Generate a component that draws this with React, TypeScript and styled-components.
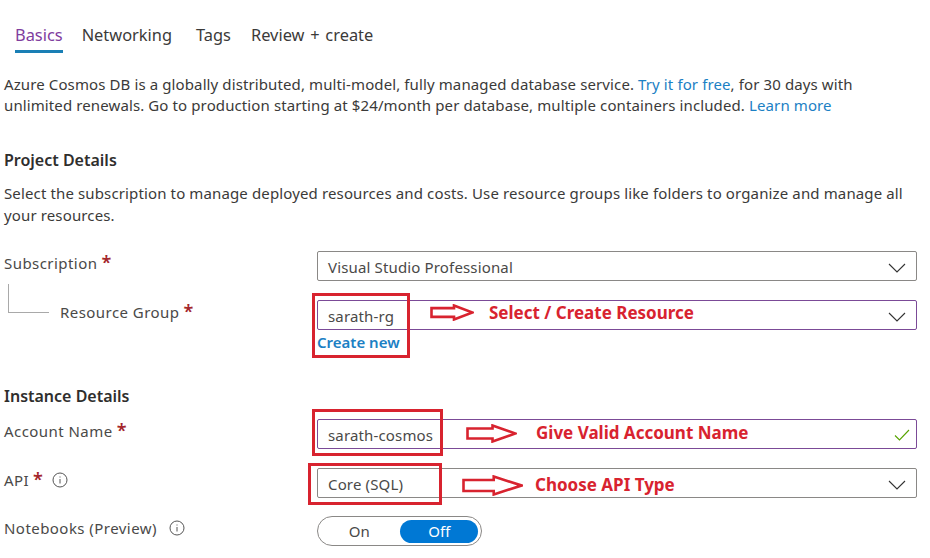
import React from "react";
import styled, { createGlobalStyle } from "styled-components";

const Global = createGlobalStyle`
  html, body { margin: 0; padding: 0; background: #fff; }
  body { font-family: "Noto Sans", "Open Sans", sans-serif; color: #323130; }
`;

const Page = styled.div`
  position: relative;
  width: 930px;
  height: 558px;
  overflow: hidden;
  box-sizing: border-box;
  padding: 0 13px 0 4px;
  background: #fff;
`;

const Tabs = styled.nav`
  display: flex;
  height: 53px;
  padding-left: 11px;
  gap: 20px;
`;

const Tab = styled.a<{ $active?: boolean; $gap?: number }>`
  display: block;
  box-sizing: border-box;
  height: 53px;
  padding-top: 23px;
  font-size: 16.4px;
  line-height: 24px;
  word-spacing: 1.5px;
  color: ${(p) => (p.$active ? "#803d9e" : "#3b3a39")};
  border-bottom: 3px solid ${(p) => (p.$active ? "#1a7fb5" : "transparent")};
  margin-right: ${(p) => p.$gap ?? 0}px;
`;

const Intro = styled.p`
  margin: 21px 0 0;
  font-size: 15px;
  letter-spacing: 0.11px;
  line-height: 21px;
  color: #3b3a39;
  white-space: nowrap;
`;

const Link = styled.a`
  color: #1b80c4;
`;

const SectionTitle = styled.h2<{ $top: number }>`
  margin: ${(p) => p.$top}px 0 0;
  font-size: 16px;
  line-height: 22px;
  font-weight: 600;
  color: #2f2e2d;
`;

const Description = styled.p`
  margin: 11px 0 0;
  width: 910px;
  font-size: 15px;
  letter-spacing: 0.13px;
  line-height: 22px;
  color: #3b3a39;
`;

const Row = styled.div<{ $top: number }>`
  display: grid;
  grid-template-columns: 313px 600px;
  margin-top: ${(p) => p.$top}px;
`;

const Label = styled.div`
  display: flex;
  align-items: center;
  height: 24px;
  font-size: 15px;
  letter-spacing: 0.45px;
  color: #4a4948;
  white-space: nowrap;
`;

const Star = styled.span`
  align-self: flex-start;
  color: #a4262c;
  margin-left: 4px;
  font-size: 18px;
  line-height: 22px;
  font-weight: 600;
`;

const Info = styled.svg<{ $left: number }>`
  width: 16px;
  height: 16px;
  margin-left: ${(p) => p.$left}px;
  color: #555;
`;

const Connector = styled.span`
  display: block;
  flex: none;
  box-sizing: border-box;
  width: 41px;
  height: 29px;
  margin: -27px 11px 0 4px;
  border-left: 1px solid #a9a9a9;
  border-bottom: 1px solid #a9a9a9;
`;

const FieldBox = styled.div<{ $focus?: boolean }>`
  display: flex;
  align-items: center;
  justify-content: space-between;
  box-sizing: border-box;
  height: 30px;
  padding: 2px 19px 0 10px;
  border: 1px solid ${(p) => (p.$focus ? "#7b4a97" : "#8a8886")};
  border-radius: 2px;
  font-size: 15px;
  letter-spacing: 0.15px;
  color: #4a4948;
  background: #fff;
`;

const FieldValue = styled.span`
  padding-top: 0;
`;

const CreateNew = styled.a`
  display: block;
  margin-top: 2px;
  font-size: 15px;
  line-height: 20px;
  font-weight: 600;
  color: #1b80c4;
`;

const Toggle = styled.div`
  display: flex;
  align-items: center;
  box-sizing: border-box;
  width: 165px;
  height: 30px;
  padding: 0 3px 0 0;
  border: 1px solid #8a8886;
  border-radius: 15px;
  font-size: 15px;
`;

const ToggleOption = styled.span<{ $on?: boolean }>`
  display: flex;
  align-items: center;
  justify-content: center;
  width: ${(p) => (p.$on ? 78 : 83)}px;
  height: 23px;
  border-radius: 12px;
  color: ${(p) => (p.$on ? "#fff" : "#4a4948")};
  background: ${(p) => (p.$on ? "#0078d4" : "transparent")};
`;

const Markup = styled.div<{ $x: number; $y: number; $w: number; $h: number }>`
  position: absolute;
  box-sizing: border-box;
  left: ${(p) => p.$x}px;
  top: ${(p) => p.$y}px;
  width: ${(p) => p.$w}px;
  height: ${(p) => p.$h}px;
  border: 3px solid #d8232f;
`;

const Note = styled.span<{ $x: number; $y: number }>`
  position: absolute;
  left: ${(p) => p.$x}px;
  top: ${(p) => p.$y}px;
  font-size: 17px;
  line-height: 22px;
  font-weight: 700;
  color: #d8232f;
  white-space: nowrap;
  font-family: "Noto Sans", "Open Sans", sans-serif;
`;

const ArrowSvg = styled.svg<{ $x: number; $y: number }>`
  position: absolute;
  left: ${(p) => p.$x}px;
  top: ${(p) => p.$y}px;
`;

const Arrow = ({ x, y, w, h }: { x: number; y: number; w: number; h: number }) => {
  const head = x === 430 ? 20 : w * 0.48;
  const mid = h / 2;
  const sh = h * 0.26;
  const pts = [
    [1.5, mid - sh],
    [w - head, mid - sh],
    [w - head, 1.5],
    [w - 1.5, mid],
    [w - head, h - 1.5],
    [w - head, mid + sh],
    [1.5, mid + sh],
  ]
    .map((p) => p.join(","))
    .join(" ");
  return (
    <ArrowSvg $x={x} $y={y} width={w} height={h} viewBox={`0 0 ${w} ${h}`}>
      <polygon points={pts} fill="#fff" stroke="#d8232f" strokeWidth="2.6" />
    </ArrowSvg>
  );
};

const ChevronSvg = styled.svg`
  margin: 2px -9px 0 0;
`;

const Chevron = () => (
  <ChevronSvg width="18" height="10" viewBox="0 0 18 10" fill="none">
    <path d="M1 1l8 8 8-8" stroke="#333" strokeWidth="1.1" />
  </ChevronSvg>
);

const CheckSvg = styled.svg`
  margin-right: -13px;
`;

const Check = () => (
  <CheckSvg width="16" height="12" viewBox="0 0 16 12" fill="none">
    <path d="M1 6.5l4.5 4.5L15 1" stroke="#57a300" strokeWidth="1.1" />
  </CheckSvg>
);

const InfoIcon = ({ left }: { left: number }) => (
  <Info $left={left} viewBox="0 0 16 16" fill="none">
    <circle cx="8" cy="8" r="7" stroke="currentColor" strokeWidth="1" />
    <path d="M8 7v4.5M8 4.5v1" stroke="currentColor" strokeWidth="1" />
  </Info>
);

export default function App() {
  return (
    <Page>
      <Global />
      <Tabs>
        <Tab $active $gap={-1}>Basics</Tab>
        <Tab $gap={4}>Networking</Tab>
        <Tab>Tags</Tab>
        <Tab>Review + create</Tab>
      </Tabs>
      <Intro>
        Azure Cosmos DB is a globally distributed, multi-model, fully managed database service.{" "}
        <Link>Try it for free</Link>, for 30 days with
        <br />
        unlimited renewals. Go to production starting at $24/month per database, multiple containers included.{" "}
        <Link>Learn more</Link>
      </Intro>
      <SectionTitle $top={33}>Project Details</SectionTitle>
      <Description>
        Select the subscription to manage deployed resources and costs. Use resource groups like folders to organize and manage all your resources.
      </Description>
      <Row $top={25}>
        <Label>
          Subscription<Star>*</Star>
        </Label>
        <FieldBox>
          <FieldValue>Visual Studio Professional</FieldValue>
          <Chevron />
        </FieldBox>
      </Row>
      <Row $top={19}>
        <Label>
          <Connector />
          Resource Group<Star>*</Star>
        </Label>
        <div>
          <FieldBox $focus>
            <FieldValue>sarath-rg</FieldValue>
            <Chevron />
          </FieldBox>
          <CreateNew>Create new</CreateNew>
        </div>
      </Row>
      <SectionTitle $top={33}>Instance Details</SectionTitle>
      <Row $top={12}>
        <Label>
          Account Name<Star>*</Star>
        </Label>
        <FieldBox $focus>
          <FieldValue>sarath-cosmos</FieldValue>
          <Check />
        </FieldBox>
      </Row>
      <Row $top={19}>
        <Label>
          API<Star>*</Star>
          <InfoIcon left={9} />
        </Label>
        <FieldBox>
          <FieldValue>Core (SQL)</FieldValue>
          <Chevron />
        </FieldBox>
      </Row>
      <Row $top={18}>
        <Label>
          Notebooks (Preview)
          <InfoIcon left={12} />
        </Label>
        <Toggle>
          <ToggleOption>On</ToggleOption>
          <ToggleOption $on>Off</ToggleOption>
        </Toggle>
      </Row>

      <Markup $x={312} $y={293} $w={98} $h={65} />
      <Markup $x={312} $y={409} $w={131} $h={47} />
      <Markup $x={308} $y={463} $w={134} $h={42} />
      <Arrow x={430} y={304} w={44} h={17} />
      <Arrow x={466} y={424} w={51} h={19} />
      <Arrow x={462} y={475} w={61} h={21} />
      <Note $x={489} $y={302}>Select / Create Resource</Note>
      <Note $x={536} $y={422}>Give Valid Account Name</Note>
      <Note $x={535} $y={474}>Choose API Type</Note>
    </Page>
  );
}
